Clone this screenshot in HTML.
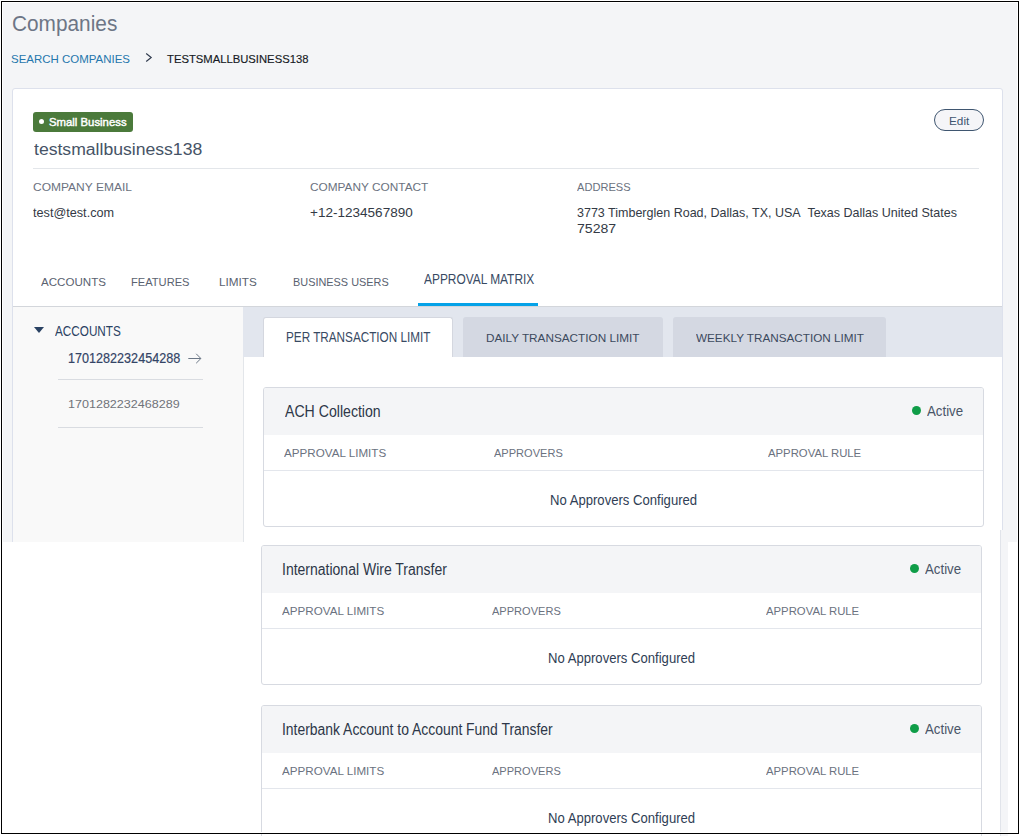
<!DOCTYPE html>
<html><head><meta charset="utf-8">
<style>
*{margin:0;padding:0;box-sizing:border-box}
html,body{width:1019px;height:836px;overflow:hidden;background:#fff;font-family:"Liberation Sans",sans-serif}
.a{position:absolute}
.t{position:absolute;white-space:nowrap;line-height:1;transform-origin:0 0}
#page{position:absolute;left:0;top:0;width:1019px;height:836px;background:#f4f5f7}
</style></head><body>
<div id="page">
  <svg class="a" style="left:144px;top:52px" width="10" height="11" viewBox="0 0 10 11"><path d="M2.2 1.5 L7.2 5.5 L2.2 9.5" fill="none" stroke="#2f3a4d" stroke-width="1.15"/></svg>
  <!-- main card -->
  <div class="a" style="left:12px;top:88px;width:991px;height:460px;background:#fff;border:1px solid #dde1ec;border-radius:3px"></div>
  <div class="a" style="left:33px;top:112px;width:100px;height:20px;background:#4b7a3b;border-radius:3px"></div>
  <div class="a" style="left:39px;top:119px;width:5px;height:5px;background:#fff;border-radius:50%"></div>
  <div class="a" style="left:934px;top:109px;width:50px;height:22px;background:#f5f5f8;border:1.5px solid #3f5670;border-radius:11px"></div>
  <div class="a" style="left:33px;top:168px;width:946px;height:1px;background:#e3e6ea"></div>
  <div class="a" style="left:418px;top:303px;width:120px;height:3px;background:#05a2e8"></div>
  <div class="a" style="left:13px;top:306px;width:989px;height:1px;background:#d3d6db"></div>
  <!-- left panel -->
  <div class="a" style="left:13px;top:307px;width:230px;height:235px;background:#f9f9f9"></div>
  <div class="a" style="left:243px;top:307px;width:1px;height:235px;background:#e3e6ea"></div>
  <svg class="a" style="left:34px;top:327px" width="10" height="6" viewBox="0 0 10 6"><path d="M0 0 L10 0 L5 6 Z" fill="#2a4263"/></svg>
  <svg class="a" style="left:187px;top:352px" width="16" height="13" viewBox="0 0 16 13"><path d="M1.3 6.5 H13.8 M9.2 1.8 L13.9 6.5 L9.2 11.2" fill="none" stroke="#6b7786" stroke-width="1"/></svg>
  <div class="a" style="left:58px;top:379px;width:145px;height:1px;background:#d9dce1"></div>
  <div class="a" style="left:58px;top:427px;width:145px;height:1px;background:#d9dce1"></div>
  <!-- right panel band -->
  <div class="a" style="left:243px;top:307px;width:759px;height:50px;background:#e2e6ee"></div>
  <div class="a" style="left:263px;top:317px;width:190px;height:40px;background:#fff;border:1px solid #d4d7df;border-bottom:0;border-radius:3px 3px 0 0"></div>
  <div class="a" style="left:463px;top:317px;width:200px;height:40px;background:#d4d8e2;border-radius:3px 3px 0 0"></div>
  <div class="a" style="left:673px;top:317px;width:213px;height:40px;background:#d4d8e2;border-radius:3px 3px 0 0"></div>
  <!-- card 1 -->
  <div class="a" style="left:263px;top:387px;width:721px;height:140px;background:#fff;border:1px solid #d7dae1;border-radius:3px;overflow:hidden">
    <div class="a" style="left:0;top:0;width:100%;height:47px;background:#f4f5f7"></div>
    <div class="a" style="left:0;top:82px;width:100%;height:1px;background:#e3e6ec"></div>
  </div>
  <div class="a" style="left:911.5px;top:406.3px;width:9px;height:9px;border-radius:50%;background:#0f9d48"></div>
<div class="t" style="left:11.73px;top:14px;font-size:21.5px;color:#6d7686;transform:scaleX(0.9682);">Companies</div>
<div class="t" style="left:11.40px;top:54px;font-size:11.5px;color:#2577ad;transform:scaleX(0.9975);">SEARCH COMPANIES</div>
<div class="t" style="left:167.40px;top:54px;font-size:11.5px;color:#161a24;-webkit-text-stroke:0.15px #161a24;transform:scaleX(0.9792);">TESTSMALLBUSINESS138</div>
<div class="t" style="left:48.64px;top:117px;font-size:11.8px;color:#ffffff;-webkit-text-stroke:0.45px #fff;transform:scaleX(0.9620);">Small Business</div>
<div class="t" style="left:33.70px;top:141px;font-size:17.25px;color:#465366;transform:scaleX(1.0201);">testsmallbusiness138</div>
<div class="t" style="left:948.68px;top:115px;font-size:11.6px;color:#3f5670;transform:scaleX(1.0158);">Edit</div>
<div class="t" style="left:32.94px;top:182px;font-size:11.3px;color:#6b7280;transform:scaleX(1.0620);">COMPANY EMAIL</div>
<div class="t" style="left:309.85px;top:182px;font-size:11.3px;color:#6b7280;transform:scaleX(1.0473);">COMPANY CONTACT</div>
<div class="t" style="left:577.00px;top:182px;font-size:11.3px;color:#6b7280;transform:scaleX(0.9815);">ADDRESS</div>
<div class="t" style="left:33.40px;top:206px;font-size:13.2px;color:#333a45;transform:scaleX(0.9595);">test@test.com</div>
<div class="t" style="left:309.57px;top:206px;font-size:13.2px;color:#333a45;transform:scaleX(1.0263);">+12-1234567890</div>
<div class="t" style="left:576.85px;top:206px;font-size:13.2px;color:#333a45;transform:scaleX(0.9486);">3773 Timberglen Road, Dallas, TX, USA  Texas Dallas United States</div>
<div class="t" style="left:576.73px;top:222px;font-size:13.2px;color:#333a45;transform:scaleX(1.0686);">75287</div>
<div class="t" style="left:41.20px;top:277px;font-size:11.5px;color:#5a6270;transform:scaleX(1.0063);">ACCOUNTS</div>
<div class="t" style="left:130.53px;top:277px;font-size:11.5px;color:#5a6270;transform:scaleX(0.9678);">FEATURES</div>
<div class="t" style="left:219.38px;top:277px;font-size:11.5px;color:#5a6270;transform:scaleX(1.0194);">LIMITS</div>
<div class="t" style="left:292.85px;top:277px;font-size:11.5px;color:#5a6270;transform:scaleX(0.9475);">BUSINESS USERS</div>
<div class="t" style="left:424.30px;top:272px;font-size:14.2px;color:#384a63;transform:scaleX(0.8389);">APPROVAL MATRIX</div>
<div class="t" style="left:54.90px;top:324px;font-size:14.6px;color:#2a4263;transform:scaleX(0.8037);">ACCOUNTS</div>
<div class="t" style="left:67.54px;top:351px;font-size:14.6px;color:#334466;-webkit-text-stroke:0.2px #334466;transform:scaleX(0.8641);">1701282232454288</div>
<div class="t" style="left:67.71px;top:399px;font-size:11.5px;color:#707379;transform:scaleX(1.0911);">1701282232468289</div>
<div class="t" style="left:285.88px;top:330px;font-size:14.3px;color:#384a63;transform:scaleX(0.8200);">PER TRANSACTION LIMIT</div>
<div class="t" style="left:486.18px;top:333px;font-size:11.5px;color:#3c4a5e;transform:scaleX(1.0221);">DAILY TRANSACTION LIMIT</div>
<div class="t" style="left:696.30px;top:333px;font-size:11.5px;color:#3c4a5e;transform:scaleX(1.0183);">WEEKLY TRANSACTION LIMIT</div>
<div class="t" style="left:285.00px;top:404px;font-size:16.0px;color:#2d3748;transform:scaleX(0.8822);">ACH Collection</div>
<div class="t" style="left:927.00px;top:404px;font-size:14.0px;color:#4a5568;transform:scaleX(0.9474);">Active</div>
<div class="t" style="left:284.00px;top:448px;font-size:11.5px;color:#6b7280;transform:scaleX(1.0120);">APPROVAL LIMITS</div>
<div class="t" style="left:494.40px;top:448px;font-size:11.5px;color:#6b7280;transform:scaleX(0.9606);">APPROVERS</div>
<div class="t" style="left:767.80px;top:448px;font-size:11.5px;color:#6b7280;transform:scaleX(0.9851);">APPROVAL RULE</div>
<div class="t" style="left:550.38px;top:493px;font-size:14.3px;color:#2f3e55;transform:scaleX(0.9164);">No Approvers Configured</div>
</div>
<!-- lower stitched section -->
<div class="a" style="left:0;top:542px;width:1019px;height:294px;background:#fff"></div>
<div class="a" style="left:1001px;top:530px;width:7px;height:306px;background:#f4f5f7"></div>
<div class="a" style="left:1000px;top:530px;width:1px;height:306px;background:#e1e4ea"></div>
<div class="a" style="left:1001px;top:530px;width:16px;height:12px;background:#f4f5f7"></div>
<!-- card 2 -->
<div class="a" style="left:261px;top:545px;width:721px;height:140px;background:#fff;border:1px solid #d7dae1;border-radius:3px;overflow:hidden">
  <div class="a" style="left:0;top:0;width:100%;height:47px;background:#f4f5f7"></div>
  <div class="a" style="left:0;top:82px;width:100%;height:1px;background:#e3e6ec"></div>
</div>
<div class="a" style="left:909.5px;top:564.3px;width:9px;height:9px;border-radius:50%;background:#0f9d48"></div>
<!-- card 3 -->
<div class="a" style="left:261px;top:705px;width:721px;height:140px;background:#fff;border:1px solid #d7dae1;border-radius:3px;overflow:hidden">
  <div class="a" style="left:0;top:0;width:100%;height:47px;background:#f4f5f7"></div>
  <div class="a" style="left:0;top:82px;width:100%;height:1px;background:#e3e6ec"></div>
</div>
<div class="a" style="left:909.5px;top:724.3px;width:9px;height:9px;border-radius:50%;background:#0f9d48"></div>
<div class="t" style="left:282.13px;top:562px;font-size:16.0px;color:#2d3748;transform:scaleX(0.8749);">International Wire Transfer</div>
<div class="t" style="left:925.00px;top:562px;font-size:14.0px;color:#4a5568;transform:scaleX(0.9474);">Active</div>
<div class="t" style="left:282.00px;top:606px;font-size:11.5px;color:#6b7280;transform:scaleX(1.0120);">APPROVAL LIMITS</div>
<div class="t" style="left:492.40px;top:606px;font-size:11.5px;color:#6b7280;transform:scaleX(0.9606);">APPROVERS</div>
<div class="t" style="left:765.80px;top:606px;font-size:11.5px;color:#6b7280;transform:scaleX(0.9851);">APPROVAL RULE</div>
<div class="t" style="left:548.38px;top:651px;font-size:14.3px;color:#2f3e55;transform:scaleX(0.9164);">No Approvers Configured</div>
<div class="t" style="left:282.13px;top:722px;font-size:16.0px;color:#2d3748;transform:scaleX(0.8697);">Interbank Account to Account Fund Transfer</div>
<div class="t" style="left:925.00px;top:722px;font-size:14.0px;color:#4a5568;transform:scaleX(0.9474);">Active</div>
<div class="t" style="left:282.00px;top:766px;font-size:11.5px;color:#6b7280;transform:scaleX(1.0120);">APPROVAL LIMITS</div>
<div class="t" style="left:492.40px;top:766px;font-size:11.5px;color:#6b7280;transform:scaleX(0.9606);">APPROVERS</div>
<div class="t" style="left:765.80px;top:766px;font-size:11.5px;color:#6b7280;transform:scaleX(0.9851);">APPROVAL RULE</div>
<div class="t" style="left:548.38px;top:811px;font-size:14.3px;color:#2f3e55;transform:scaleX(0.9164);">No Approvers Configured</div>
<!-- frame -->
<div class="a" style="left:1px;top:1px;width:1018px;height:833px;border:1px solid #000"></div>
<div class="a" style="left:2px;top:2px;width:1016px;height:831px;border:1px solid #fff"></div>
<div class="a" style="left:0;top:0;width:1019px;height:1px;background:#fff"></div>
<div class="a" style="left:0;top:0;width:1px;height:834px;background:#fff"></div>
</body></html>
